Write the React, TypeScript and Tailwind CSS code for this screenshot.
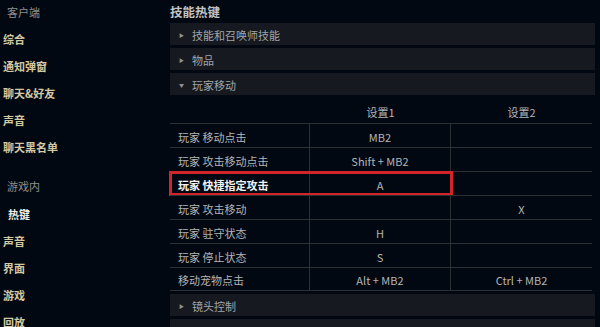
const font = { fontFamily: '"Noto Sans CJK SC", "Noto Sans", sans-serif' };

const clientItems = ["综合", "通知弹窗", "聊天&好友", "声音", "聊天黑名单"];
const gameItems = ["热键", "声音", "界面", "游戏", "回放"];

const rows = [
  { name: "玩家 移动点击", a: "MB2", b: "" },
  { name: "玩家 攻击移动点击", a: "Shift + MB2", b: "" },
  { name: "玩家 快捷指定攻击", a: "A", b: "", active: true },
  { name: "玩家 攻击移动", a: "", b: "X" },
  { name: "玩家 驻守状态", a: "H", b: "" },
  { name: "玩家 停止状态", a: "S", b: "" },
  { name: "移动宠物点击", a: "Alt + MB2", b: "Ctrl + MB2" },
];

function Section({ label, open }: { label?: string; open?: boolean }) {
  return (
    <div className="h-[22px] shrink-0 bg-[#161a20] flex items-center pl-[9px] pt-[2px] text-[11px] text-[#a3a5a8]">
      {label && <span className="w-[13px] text-[5px] text-[#8d9096]">{open ? "▼" : "▶"}</span>}
      {label && <span>{label}</span>}
    </div>
  );
}

export default function App() {
  return (
    <div style={font} className="w-[600px] h-[327px] overflow-hidden bg-[#020811] flex">
      {/* sidebar */}
      <aside className="w-[170px] shrink-0 flex flex-col pt-[2px]">
        <div className="h-[20px] shrink-0 flex items-center pl-[7px] text-[11px] text-[#8f8f8f]">客户端</div>
        <div className="h-[4px] shrink-0" />
        {clientItems.map((t) => (
          <div key={t} className="h-[27px] shrink-0 flex items-center pl-[3px] text-[11px] font-bold text-[#d4c9a3]">
            {t}
          </div>
        ))}
        <div className="h-[15px] shrink-0" />
        <div className="h-[20px] shrink-0 flex items-center pl-[7px] text-[11px] text-[#8f8f8f]">游戏内</div>
        <div className="h-[5px] shrink-0" />
        {gameItems.map((t, i) => (
          <div
            key={t + i}
            className={
              i === 0
                ? "h-[27px] shrink-0 flex items-center pl-[8px] text-[11px] font-bold text-[#f0ede4]"
                : "h-[27px] shrink-0 flex items-center pl-[3px] text-[11px] font-bold text-[#d4c9a3]"
            }
          >
            {t}
          </div>
        ))}
      </aside>

      {/* main */}
      <main className="w-[425px] flex flex-col pt-[1px]">
        <div className="h-[22px] shrink-0 flex items-center pt-[1px] text-[12.5px] font-bold text-[#c2c3c5]">技能热键</div>
        <div className="flex flex-col gap-[3px] shrink-0">
          <Section label="技能和召唤师技能" />
          <Section label="物品" />
          <Section label="玩家移动" open />
        </div>

        <div className="mr-[3px] shrink-0 text-[11px] text-[#b4b5b7]">
          <div className="h-[28px] grid grid-cols-[140px_141px_1fr] items-center pt-[6px]">
            <div />
            <div className="text-center">设置1</div>
            <div className="text-center">设置2</div>
          </div>
          {rows.map((r) => (
            <div
              key={r.name}
              className="relative h-[24px] grid grid-cols-[140px_141px_1fr] border-t border-[#2d3136] last:border-b"
            >
              <div
                className={
                  r.active
                    ? "flex items-center pl-[8px] pt-[3px] border-r border-[#2d3136] font-bold text-[#f2f2f2]"
                    : "flex items-center pl-[8px] pt-[3px] border-r border-[#2d3136]"
                }
              >
                {r.name}
              </div>
              <div className="flex items-center justify-center pt-[3px] border-r border-[#2d3136]">{r.a}</div>
              <div className="flex items-center justify-center pt-[3px]">{r.b}</div>
              {r.active && (
                <div className="absolute left-[-1px] top-[-1px] w-[284px] h-[25px] border-[3px] border-[#d3242a]" />
              )}
            </div>
          ))}
        </div>

        <div className="mt-[3px] flex flex-col gap-[3px] shrink-0">
          <Section label="镜头控制" />
          <Section />
        </div>
      </main>
    </div>
  );
}
